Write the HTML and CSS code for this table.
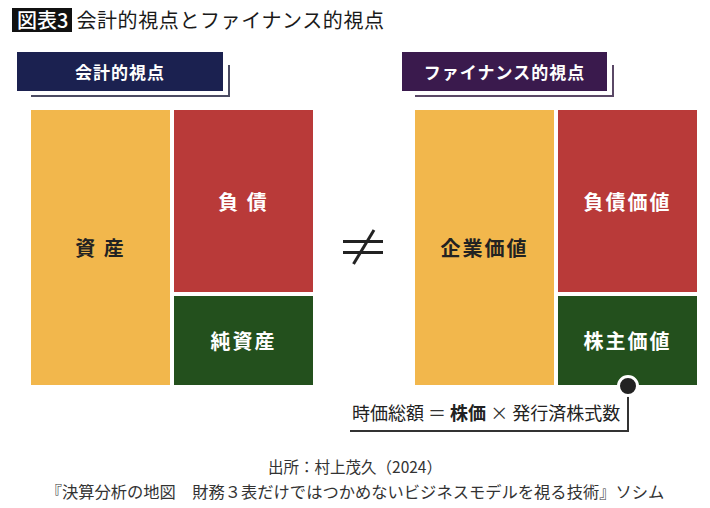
FILE: index.html
```html
<!DOCTYPE html>
<html lang="ja">
<head>
<meta charset="utf-8">
<link rel="stylesheet" href="styles.css">
</head>
<body>
<div class="page">
  <header class="title">
    <span class="fig-no">図表3</span>
    <h1 class="title-text">会計的視点とファイナンス的視点</h1>
  </header>

  <section class="diagram">
    <div class="panel">
      <div class="head head-acc">会計的視点</div>
      <div class="blocks">
        <div class="blk yellow tall">資 産</div>
        <div class="blk red">負 債</div>
        <div class="blk green">純資産</div>
      </div>
    </div>

    <div class="neq">
      <svg width="42" height="38" viewBox="0 0 42 38">
        <line x1="0" y1="12.5" x2="40" y2="12.5" stroke="#222" stroke-width="3"/>
        <line x1="0" y1="23.5" x2="40" y2="23.5" stroke="#222" stroke-width="3"/>
        <line x1="10.5" y1="35" x2="31" y2="1" stroke="#222" stroke-width="3"/>
      </svg>
    </div>

    <div class="panel panel-right">
      <div class="head head-fin">ファイナンス的視点</div>
      <div class="blocks">
        <div class="blk yellow tall">企業価値</div>
        <div class="blk red">負債価値</div>
        <div class="blk green">株主価値</div>
      </div>
    </div>
  </section>

  <div class="formula">
    <span class="dot"></span>
    <p class="formula-text">時価総額 <span class="op">＝</span> <b>株価</b> <span class="op">×</span> 発行済株式数</p>
  </div>

  <footer class="source">
    <p class="src1">出所：村上茂久（2024）</p>
    <p class="src2">『決算分析の地図　財務３表だけではつかめないビジネスモデルを視る技術』ソシム</p>
  </footer>
</div>
</body>
</html>
```

FILE: styles.css
```css
* { box-sizing: border-box; }
html, body { margin: 0; padding: 0; background: #fff; }
body {
  font-family: "Noto Sans CJK JP", "Noto Sans", sans-serif;
  color: #222;
}
.page { width: 710px; height: 508px; overflow: hidden; }

.title {
  display: flex;
  align-items: center;
  gap: 4px;
  padding: 8px 0 0 12px;
  height: 32px;
}
.fig-no {
  background: #111;
  color: #fff;
  font-size: 20px;
  font-weight: 500;
  line-height: 24px;
  height: 24px;
  padding: 0 4px 0 5px;
}
.title-text {
  margin: 0;
  font-size: 20px;
  font-weight: 400;
  line-height: 24px;
  letter-spacing: 0.6px;
  color: #1a1a1a;
}

.diagram {
  display: flex;
  margin-top: 20px;
  padding-left: 17px;
}
.panel { width: 296px; }
.panel-right { width: 295px; }

.head {
  position: relative;
  width: 206px;
  height: 39px;
  color: #fff;
  font-size: 17px;
  font-weight: 700;
  letter-spacing: 1px;
  display: flex;
  align-items: center;
  justify-content: center;
}
.head::after {
  content: "";
  position: absolute;
  left: 14px;
  top: 13px;
  right: -7px;
  bottom: -6px;
  border-right: 2px solid #4b4b62;
  border-bottom: 2px solid #4b4b62;
}
.head-acc { background: #1b2150; }
.head-fin { background: #3a1a4d; width: 205px; }
.head-fin::after { border-color: #5a4866; left: 13px; }

.blocks {
  margin-top: 19px;
  margin-left: 14px;
  width: 282px;
  height: 275px;
  display: grid;
  grid-template-columns: 139px 139px;
  grid-template-rows: 182px 89px;
  gap: 4px;
}
.panel-right .blocks { margin-left: 13px; }

.blk {
  display: flex;
  align-items: center;
  justify-content: center;
  font-size: 20px;
  font-weight: 700;
  letter-spacing: 2px;
  color: #fff;
}
.tall { grid-row: 1 / 3; }
.yellow { background: #f2b74c; color: #222; }
.red { background: #b93a39; }
.green { background: #23501d; }

.neq {
  width: 89px;
  height: 275px;
  align-self: flex-end;
  display: flex;
  align-items: center;
  justify-content: center;
  padding-left: 12px;
}

.formula {
  position: relative;
  margin-left: 350px;
  width: 279px;
  height: 47px;
  border-right: 2px solid #333;
  border-bottom: 2px solid #333;
}
.dot {
  position: absolute;
  right: -9px;
  top: -7px;
  width: 16px;
  height: 16px;
  border-radius: 50%;
  background: #222;
  border: 3px solid #fff;
  box-sizing: content-box;
  margin: -3px;
}
.formula-text {
  margin: 0;
  padding: 16px 0 0 2px;
  font-size: 18px;
  line-height: 22px;
  color: #222;
  white-space: nowrap;
}
.formula-text b { font-weight: 700; }
.op { color: #333; }

.source {
  margin-top: 22px;
  text-align: center;
  color: #333;
  line-height: 25px;
}
.source p { margin: 0; white-space: nowrap; }
.src1 { font-size: 15.5px; }
.src2 { font-size: 16.3px; }
```
